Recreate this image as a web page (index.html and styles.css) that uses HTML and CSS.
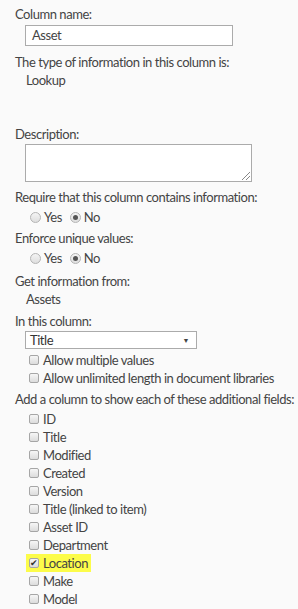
FILE: index.html
```html
<!DOCTYPE html>
<html lang="en">
<head>
  <meta charset="UTF-8" />
  <title>Column settings</title>
  <link rel="stylesheet" href="styles.css">
</head>
<body>
  <div class="form">
    <div class="label">Column name:</div>
    <div class="textbox">Asset</div>
    <div class="label after-box">The type of information in this column is:</div>
    <div class="value">Lookup</div>

    <div class="label gap-big">Description:</div>
    <div class="textarea"><span class="grip"></span></div>

    <div class="label after-area">Require that this column contains information:</div>
    <div class="radios">
      <span class="radio"></span><span>Yes</span>
      <span class="radio on"></span><span>No</span>
    </div>
    <div class="label after-radios">Enforce unique values:</div>
    <div class="radios">
      <span class="radio"></span><span>Yes</span>
      <span class="radio on"></span><span>No</span>
    </div>

    <div class="label after-group">Get information from:</div>
    <div class="value">Assets</div>
    <div class="label after-value">In this column:</div>
    <div class="select">Title<span class="arrow">▼</span></div>
    <div class="checks">
      <div class="check"><span class="box"></span>Allow multiple values</div>
      <div class="check"><span class="box"></span>Allow unlimited length in document libraries</div>
    </div>

    <div class="label after-radios">Add a column to show each of these additional fields:</div>
    <div class="checks">
      <div class="check"><span class="box"></span>ID</div>
      <div class="check"><span class="box"></span>Title</div>
      <div class="check"><span class="box"></span>Modified</div>
      <div class="check"><span class="box"></span>Created</div>
      <div class="check"><span class="box"></span>Version</div>
      <div class="check"><span class="box"></span>Title (linked to item)</div>
      <div class="check"><span class="box"></span>Asset ID</div>
      <div class="check"><span class="box"></span>Department</div>
      <div class="check"><span class="mark"><span class="box on">&#10004;</span>Location</span></div>
      <div class="check"><span class="box"></span>Make</div>
      <div class="check"><span class="box"></span>Model</div>
    </div>
  </div>
</body>
</html>
```

FILE: styles.css
```css
* { box-sizing: border-box; }
body {
  margin: 0;
  background: #fafafa;
  color: #444;
  font-family: 'Lato', sans-serif;
  font-size: 13px;
  line-height: 18px;
  letter-spacing: -0.45px;
}
.form {
  padding: 5px 0 0 15px;
}
.label { height: 18px; white-space: nowrap; }
.value { padding-left: 11px; height: 18px; }
.gap-big { margin-top: 36px; }
.after-box { margin-top: 7px; }
.after-area { margin-top: 6px; }
.after-radios { margin-top: 3px; }
.after-group { margin-top: 5px; }
.after-value { margin-top: 4px; }

.textbox {
  margin: 2px 0 0 10px;
  width: 208px;
  height: 21px;
  background: #fff;
  border: 1px solid #ababab;
  padding: 0 6px;
  line-height: 19px;
}
.textarea {
  position: relative;
  margin: 1px 0 0 10px;
  width: 227px;
  height: 38px;
  background: #fff;
  border: 1px solid #ababab;
}
.grip {
  position: absolute;
  right: 1px;
  bottom: 1px;
  width: 8px;
  height: 8px;
  background: linear-gradient(135deg, transparent 45%, #888 45%, #888 52%, transparent 52%, transparent 70%, #888 70%, #888 77%, transparent 77%);
}

.radios {
  display: flex;
  align-items: center;
  padding-left: 15px;
  height: 18px;
  margin-top: 2px;
}
.radio {
  width: 11px;
  height: 11px;
  border-radius: 50%;
  border: 1px solid #b4b4b4;
  background: linear-gradient(#f4f4f4, #dedede);
  margin-right: 3px;
  position: relative;
}
.radio + span { margin-right: 8px; }
.radio.on::after {
  content: "";
  position: absolute;
  left: 2px;
  top: 2px;
  width: 5px;
  height: 5px;
  border-radius: 50%;
  background: #555;
}

.select {
  position: relative;
  margin: 1px 0 0 10px;
  width: 172px;
  height: 18px;
  background: #fff;
  border: 1px solid #ababab;
  padding: 0 4px;
  line-height: 16px;
  color: #333;
}
.arrow {
  position: absolute;
  right: 7px;
  top: 0;
  font-size: 7px;
  color: #444;
}

.checks { margin-top: 2px; }
.check {
  display: flex;
  align-items: center;
  padding-left: 14px;
  height: 18px;
  white-space: nowrap;
}
.box {
  flex: none;
  width: 10px;
  height: 10px;
  border: 1px solid #a6a6a6;
  border-radius: 2px;
  background: linear-gradient(#f6f6f6, #dcdcdc);
  margin-right: 4px;
}
.box.on {
  font-size: 9px;
  line-height: 8px;
  text-align: center;
  color: #333;
}
.mark {
  display: flex;
  align-items: center;
  background: #fcfc4a;
  margin-left: -3px;
  padding: 0 3px;
  height: 18px;
}
```
